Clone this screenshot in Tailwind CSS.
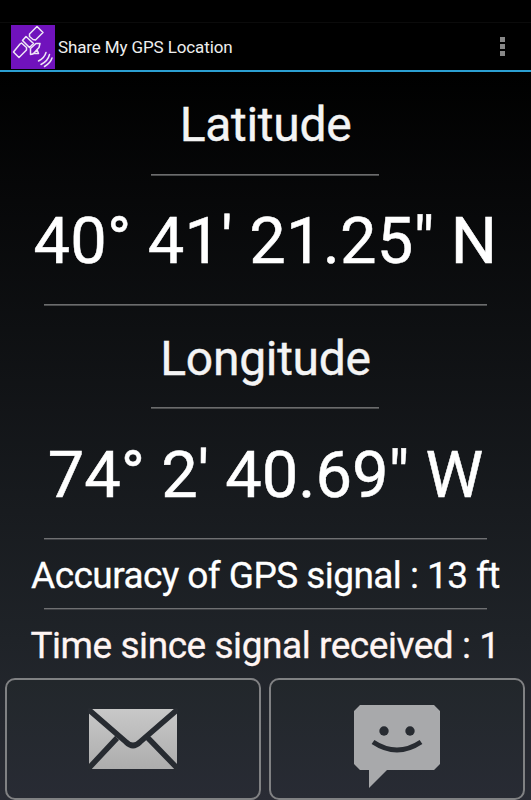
<!DOCTYPE html>
<html lang="en">
<head>
  <meta charset="UTF-8" />
  <meta name="viewport" content="width=device-width, initial-scale=1.0"/>
  <title>Share My GPS Location</title>
  <script src="https://cdn.jsdelivr.net/npm/@tailwindcss/browser@4"></script>
</head>
<body class="h-[800px] overflow-hidden bg-black font-[Roboto,sans-serif] text-white">
  <div class="flex h-[800px] w-[531px] flex-col bg-linear-to-b/srgb from-black from-9% via-[#1f2328] via-80% to-[#2a2c35]">
    <!-- Status bar -->
    <div class="h-[22px] shrink-0 bg-black"></div>

    <!-- Action bar -->
    <header class="flex h-[50px] shrink-0 items-center justify-between border-t border-b-2 border-t-[#0b0b0b] border-b-[#2b9fd2] bg-black pl-[11px] pr-[26px]">
      <div class="flex items-center">
        <svg class="h-11 w-11 bg-[#7012bc]" viewBox="0 0 44 44" fill="none" stroke="#eee6f6" stroke-width="1.5" stroke-linejoin="round" stroke-linecap="round">
          <path d="M26 1.500 32 7.500 24.500 15 22 14.500 18.500 11.500 18.500 9z"/>
          <path d="M10.500 18 15.500 22.500 15.500 25 8 32.500 2.500 27 9 19z"/>
          <path d="M15 11.500 22.500 18.500 18.500 22.500 11.500 15.500z"/>
          <path d="M29 18.500 25 18.500 19.500 23.500 19.500 29.500 22 29 28 22.500zM22 28.500 27.500 28.500 26 24.500"/>
          <path d="M35 27.500Q33.500 33 27.500 36M38.500 29.500Q37 36 30 39.500M41 33Q39.500 38 33.500 41.500"/>
        </svg>
        <h1 class="ml-[3px] pt-[2px] text-[17px] tracking-[-0.12px] text-[#eeeeee]">Share My GPS Location</h1>
      </div>
      <div class="flex flex-col gap-[2px]">
        <span class="h-[5px] w-[5px] bg-[#888888]"></span>
        <span class="h-[5px] w-[5px] bg-[#888888]"></span>
        <span class="h-[5px] w-[5px] bg-[#888888]"></span>
      </div>
    </header>

    <!-- Coordinates -->
    <main class="flex flex-1 flex-col items-center whitespace-nowrap">
      <div class="flex h-[102px] items-center pt-[3px] text-[48px] tracking-[-0.3px] text-[#f4f4f4] [-webkit-text-stroke:0.4px]"><span>Latitude</span></div>
      <div class="mr-px h-[2px] w-[228px] border-b border-[#4a4b4c] bg-[#6b6c6d]"></div>
      <div class="flex h-[128px] items-center pt-[4px] text-[65px] tracking-[0.2px] [-webkit-text-stroke:0.5px]"><span>40° 41' 21.25" N</span></div>
      <div class="h-[2px] w-[443px] border-b border-[#4a4b4c] bg-[#6b6c6d]"></div>
      <div class="flex h-[101px] items-center pt-[4px] text-[48px] tracking-[-0.3px] text-[#f4f4f4] [-webkit-text-stroke:0.4px]"><span>Longitude</span></div>
      <div class="mr-px h-[2px] w-[228px] border-b border-[#4a4b4c] bg-[#6b6c6d]"></div>
      <div class="flex h-[129px] items-center pt-[4px] text-[65px] [-webkit-text-stroke:0.5px]"><span>74° 2' 40.69" W</span></div>
      <div class="h-[2px] w-[443px] border-b border-[#3e4044] bg-[#6f7072]"></div>
      <div class="flex h-[68px] items-center pt-[4px] text-[37px] tracking-[-0.56px] [-webkit-text-stroke:0.3px]"><span>Accuracy of GPS signal : 13 ft</span></div>
      <div class="h-[2px] w-[443px] border-b border-[#3e4044] bg-[#6f7072]"></div>
      <div class="flex h-[68px] items-center pt-[4px] pr-px text-[37px] tracking-[-0.45px] text-[#fff5f3] [-webkit-text-stroke:0.3px]"><span>Time since signal received : 1</span></div>
    </main>

    <!-- Share buttons -->
    <div class="flex h-[122px] shrink-0 gap-2 pl-[5px] pr-[6px]">
      <button class="flex flex-1 items-center justify-center rounded-[10px] border-2 border-[#808183] bg-linear-to-b/srgb from-[#22272b] to-[#282b34]">
        <svg class="h-[62px] w-[90px]" viewBox="0 0 90 62">
          <defs>
            <linearGradient id="mail" x1="0" y1="0" x2="0" y2="1">
              <stop offset="0" stop-color="#c8c8c8"/>
              <stop offset="1" stop-color="#adadad"/>
            </linearGradient>
          </defs>
          <rect x="1" y="1" width="88" height="60" rx="2" fill="url(#mail)"/>
          <path d="M0 1 38 34Q45 41 52 34L90 1M0 61 29 30M90 61 60 30" fill="none" stroke="#272b31" stroke-width="5.500"/>
        </svg>
      </button>
      <button class="flex flex-1 items-center justify-center rounded-[10px] border-2 border-[#808183] bg-linear-to-b/srgb from-[#22272b] to-[#282b34] pt-[15px]">
        <svg class="h-[86px] w-[88px]" viewBox="0 0 88 86">
          <path d="M7 1H81L87 7V60L81 66H34L16 84V66H7L1 60V7z" fill="#a8a9ab"/>
          <circle cx="31" cy="27" r="4.700" fill="#272b31"/>
          <circle cx="57" cy="27" r="4.700" fill="#272b31"/>
          <path d="M20 38Q44 54 68 38" fill="none" stroke="#272b31" stroke-width="5"/>
        </svg>
      </button>
    </div>
  </div>
</body>
</html>
